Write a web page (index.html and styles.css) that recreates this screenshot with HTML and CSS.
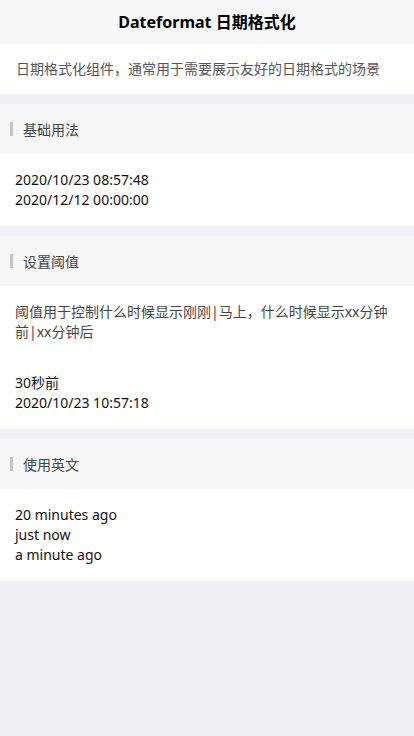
FILE: index.html
```html
<!DOCTYPE html>
<html lang="zh-CN">
<head>
    <meta charset="UTF-8">
    <meta name="viewport" content="width=device-width, initial-scale=1.0">
    <title>Dateformat 日期格式化</title>
    <link rel="stylesheet" href="styles.css">
</head>
<body>
    <header class="nav-bar">Dateformat 日期格式化</header>

    <div class="intro">日期格式化组件，通常用于需要展示友好的日期格式的场景</div>

    <section class="demo">
        <div class="demo-title">基础用法</div>
        <div class="demo-body">
            <div>2020/10/23 08:57:48</div>
            <div>2020/12/12 00:00:00</div>
        </div>
    </section>

    <section class="demo">
        <div class="demo-title">设置阈值</div>
        <div class="demo-body">
            <p class="demo-tip">阈值用于控制什么时候显示刚刚|马上，什么时候显示xx分钟前|xx分钟后</p>
            <div>30秒前</div>
            <div>2020/10/23 10:57:18</div>
        </div>
    </section>

    <section class="demo">
        <div class="demo-title">使用英文</div>
        <div class="demo-body">
            <div>20 minutes ago</div>
            <div>just now</div>
            <div>a minute ago</div>
        </div>
    </section>
</body>
</html>
```

FILE: styles.css
```css
body {
    font-family: 'Noto Sans', 'Noto Sans CJK SC', sans-serif;
    margin: 0;
    padding: 0;
    background: #efeff4;
    color: #111;
    min-height: 100vh;
}
.nav-bar {
    height: 44px;
    line-height: 44px;
    background: #f7f7f8;
    text-align: center;
    font-size: 16px;
    font-weight: 700;
    color: #000;
}
.intro {
    background: #fff;
    height: 50px;
    line-height: 50px;
    padding: 0 16px;
    font-size: 14px;
    color: #555;
}
.demo {
    margin-top: 10px;
}
.demo-title {
    height: 50px;
    display: flex;
    align-items: center;
    background: #f7f7f8;
    padding-left: 10px;
    font-size: 14px;
    color: #444;
}
.demo-title::before {
    content: "";
    width: 3px;
    height: 14px;
    background: #c4c4c4;
    margin-right: 10px;
}
.demo-body {
    background: #fff;
    padding: 16px 15px;
    font-size: 14px;
    line-height: 20px;
}
.demo-tip {
    margin: 0 0 31px;
    color: #444;
}
```
